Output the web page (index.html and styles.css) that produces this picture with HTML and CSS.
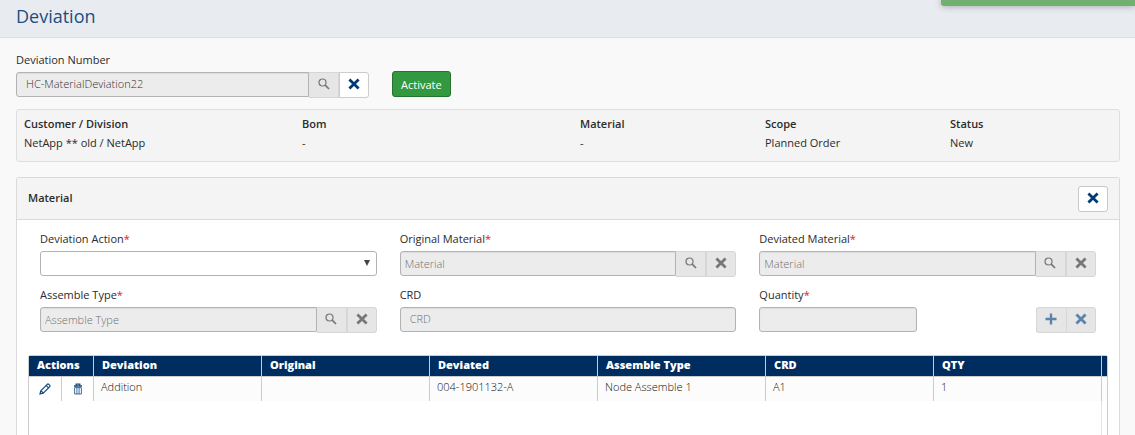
FILE: index.html
```
<!DOCTYPE html>
<html lang="en">
<head>
<meta charset="utf-8">
<title>Deviation</title>
<link rel="stylesheet" href="styles.css">
</head>
<body>
<svg class="defs" aria-hidden="true">
  <symbol id="search" viewBox="0 0 12 12"><circle cx="4.5" cy="4.5" r="3.5" fill="none" stroke="currentColor" stroke-width="1.2"/><path d="M7.2 7.2 L11 11" stroke="currentColor" stroke-width="1.7"/></symbol>
  <symbol id="cross" viewBox="0 0 12 12"><path d="M1.4 1.6 L10.6 10.4 M10.6 1.6 L1.4 10.4" stroke="currentColor" stroke-width="2.8"/></symbol>
  <symbol id="plus" viewBox="0 0 12 12"><path d="M6 0.5 V11.5 M0.5 6 H11.5" stroke="currentColor" stroke-width="2.4"/></symbol>
  <symbol id="pencil" viewBox="0 0 12 12"><path d="M1 11 L1.8 7.8 L8.2 1.4 Q9 0.6 9.8 1.4 L10.6 2.2 Q11.4 3 10.6 3.8 L4.2 10.2 Z M7.2 2.4 L9.6 4.8 M2 7.8 L4.2 10" fill="none" stroke="currentColor" stroke-width="1.2"/></symbol>
  <symbol id="trash" viewBox="0 0 12 12"><path d="M2 3 H10 M4.2 2.6 V1.2 H7.8 V2.6" fill="none" stroke="currentColor" stroke-width="1.3"/><path d="M2.6 4.6 H9.4 V11 H2.6 Z M4.9 4.6 V11 M7.1 4.6 V11" fill="none" stroke="currentColor" stroke-width="0.8"/></symbol>
</svg>
<div class="toast" role="status"></div>
<header class="page-header"><h1 class="page-title">Deviation</h1></header>
<main class="content">
  <section class="lookup">
    <div class="field lookup-field">
      <label for="number">Deviation Number</label>
      <div class="group">
        <input id="number" class="input indented" value="HC-MaterialDeviation22" disabled>
        <button class="addon" type="button" aria-label="Search deviation" disabled><svg class="icon"><use href="#search"/></svg></button>
        <button class="addon enabled" type="button" aria-label="Clear deviation"><svg class="icon"><use href="#cross"/></svg></button>
      </div>
    </div>
    <button class="activate" type="button">Activate</button>
  </section>

  <dl class="summary">
    <div><dt>Customer / Division</dt><dd>NetApp ** old / NetApp</dd></div>
    <div><dt>Bom</dt><dd>-</dd></div>
    <div><dt>Material</dt><dd>-</dd></div>
    <div><dt>Scope</dt><dd>Planned Order</dd></div>
    <div><dt>Status</dt><dd>New</dd></div>
  </dl>

  <section class="panel">
    <div class="panel-header">
      <h2 class="panel-title">Material</h2>
      <button class="close" type="button" aria-label="Close"><svg class="icon"><use href="#cross"/></svg></button>
    </div>
    <form class="form">
      <div class="field">
        <label for="action">Deviation Action<span class="req">*</span></label>
        <div class="select-wrap"><select id="action" class="input select"><option></option></select></div>
      </div>
      <div class="field">
        <label for="original">Original Material<span class="req">*</span></label>
        <div class="group">
          <input id="original" class="input" placeholder="Material" disabled>
          <button class="addon" type="button" aria-label="Search original material" disabled><svg class="icon"><use href="#search"/></svg></button>
          <button class="addon" type="button" aria-label="Clear original material" disabled><svg class="icon"><use href="#cross"/></svg></button>
        </div>
      </div>
      <div class="field">
        <label for="deviated">Deviated Material<span class="req">*</span></label>
        <div class="group">
          <input id="deviated" class="input" placeholder="Material" disabled>
          <button class="addon" type="button" aria-label="Search deviated material" disabled><svg class="icon"><use href="#search"/></svg></button>
          <button class="addon" type="button" aria-label="Clear deviated material" disabled><svg class="icon"><use href="#cross"/></svg></button>
        </div>
      </div>
      <div class="field">
        <label for="assemble">Assemble Type<span class="req">*</span></label>
        <div class="group">
          <input id="assemble" class="input" placeholder="Assemble Type" disabled>
          <button class="addon" type="button" aria-label="Search assemble type" disabled><svg class="icon"><use href="#search"/></svg></button>
          <button class="addon" type="button" aria-label="Clear assemble type" disabled><svg class="icon"><use href="#cross"/></svg></button>
        </div>
      </div>
      <div class="field">
        <label for="crd">CRD</label>
        <div class="group"><input id="crd" class="input indented rounded" placeholder="CRD" disabled></div>
      </div>
      <div class="field">
        <label for="quantity">Quantity<span class="req">*</span></label>
        <div class="group spread">
          <input id="quantity" class="input rounded short" disabled>
          <div class="group">
            <button class="addon blue first" type="button" aria-label="Add" disabled><svg class="icon"><use href="#plus"/></svg></button>
            <button class="addon blue" type="button" aria-label="Reset" disabled><svg class="icon"><use href="#cross"/></svg></button>
          </div>
        </div>
      </div>
    </form>
    <div class="grid">
      <table class="table">
        <colgroup><col class="col-edit"><col class="col-delete"><col><col><col><col><col><col><col class="col-scroll"></colgroup>
        <thead><tr><th colspan="2">Actions</th><th>Deviation</th><th>Original</th><th>Deviated</th><th>Assemble Type</th><th>CRD</th><th>QTY</th><th class="scroll"></th></tr></thead>
        <tbody><tr>
          <td class="act"><button class="row-action" type="button" aria-label="Edit"><svg class="icon"><use href="#pencil"/></svg></button></td>
          <td class="act"><button class="row-action" type="button" aria-label="Delete"><svg class="icon"><use href="#trash"/></svg></button></td>
          <td>Addition</td><td></td><td>004-1901132-A</td><td>Node Assemble 1</td><td>A1</td><td>1</td><td class="scroll"></td>
        </tr></tbody>
      </table>
      <div class="grid-rest"></div>
    </div>
  </section>
</main>
</body>
</html>
```
FILE: styles.css
```
* { box-sizing: border-box; }
body {
  margin: 0;
  height: 100vh;
  display: flex;
  flex-direction: column;
  overflow: hidden;
  background: #f9f9f9;
  color: #2b2b2b;
  font: 11px/15px "Open Sans", "Noto Sans", sans-serif;
}
button, input, select { font: inherit; margin: 0; }
.defs { display: none; }
.icon { display: block; width: 12px; height: 12px; }

.toast {
  position: fixed;
  top: 0;
  right: 0;
  width: 194px;
  height: 6px;
  background: #70b070;
  border-bottom-left-radius: 3px;
  box-shadow: 0 0 7px #999;
}
.page-header {
  padding: 4px 16px 9px;
  background: #e8ebf0;
  border-bottom: 1px solid #dcdee4;
}
.page-title {
  margin: 0;
  color: #1c4f80;
  font-size: 18px;
  font-weight: 400;
  line-height: 24px;
}
.content {
  flex: 1;
  display: flex;
  flex-direction: column;
  padding: 14px 15px 0 16px;
}

.lookup { display: flex; align-items: flex-end; gap: 23px; }
.lookup-field { width: 353px; }
.field { display: flex; flex-direction: column; gap: 5px; min-width: 0; }
.req { color: #e02020; }
.group { display: flex; align-items: flex-start; }
.spread { justify-content: space-between; }
.input {
  flex: 1;
  width: 100%;
  min-width: 0;
  height: 25px;
  padding: 0 4px 1px;
  border: 1px solid #b3b3b3;
  border-radius: 3px 0 0 3px;
  background: #ececec;
  color: #333;
  font-weight: 300;
  box-shadow: inset 0 1px 1px #ddd;
}
.input::placeholder { color: #707070; opacity: 1; }
.indented { padding: 0 9px 2px; }
.rounded { border-radius: 3px; }
.short { flex: none; width: 158px; }
.select-wrap { position: relative; display: flex; }
.select-wrap::after {
  content: "";
  position: absolute;
  top: 9px;
  right: 7px;
  border: 3px solid transparent;
  border-top: 6px solid #444;
  border-bottom: 0;
  pointer-events: none;
}
.select { appearance: none; border-radius: 3px; background: #fff; box-shadow: none; }

.addon {
  display: grid;
  place-items: center;
  width: 30px;
  height: 26px;
  padding: 0 0 3px;
  border: 1px solid #d6d6d6;
  border-left-width: 0;
  background: #e6e6e6;
  color: #777;
}
.addon:last-child { border-left-width: 1px; border-radius: 0 3px 3px 0; }
.addon.first { border-left-width: 1px; border-right-width: 0; border-radius: 3px 0 0 3px; }
.addon.blue { color: #5b83ab; }
.addon.enabled { background: #fff; border-color: #ccc; color: #003b76; }
.activate {
  height: 26px;
  margin-bottom: 1px;
  padding: 0 8px;
  border: 1px solid #26722e;
  border-radius: 3px;
  background: #339940;
  color: #fff;
}

.summary {
  display: grid;
  grid-template-columns: 278fr 278fr 185fr 185fr 169fr;
  margin: 11px 0 15px;
  padding: 6px 0 8px 7px;
  border: 1px solid #dfdfdf;
  border-radius: 3px;
  background: #f4f4f4;
}
.summary dt { font-weight: 600; margin-bottom: 4px; }
.summary dd { margin: 0 0 3px; }

.panel {
  flex: 1;
  display: flex;
  flex-direction: column;
  border: 1px solid #dadada;
  border-bottom: 0;
  border-radius: 3px 3px 0 0;
  background: #fff;
}
.panel-header {
  display: flex;
  align-items: center;
  justify-content: space-between;
  padding: 8px 11px 7px 11px;
  border-bottom: 1px solid #dadada;
  background: #f4f4f4;
}
.panel-title { margin: 0; padding-bottom: 3px; font-size: 11px; font-weight: 600; line-height: 15px; }
.close {
  display: grid;
  place-items: center;
  width: 30px;
  height: 26px;
  padding: 0 0 3px;
  border: 1px solid #c8c8c8;
  border-radius: 3px;
  background: #fff;
  color: #003b76;
}
.form {
  display: grid;
  grid-template-columns: repeat(3, 1fr);
  gap: 10px 23px;
  padding: 11px 23px 22px 23px;
}

.grid {
  flex: 1;
  display: flex;
  flex-direction: column;
  margin: 0 11px;
  border: 1px solid #ccc;
  border-bottom: 0;
  border-radius: 3px 3px 0 0;
}
.grid-rest { flex: 1; margin-right: 5px; border-right: 1px solid #e4e4e4; }
.table { width: 100%; table-layout: fixed; border-collapse: separate; border-spacing: 0; }
.col-edit { width: 33px; }
.col-delete { width: 32px; }
.col-scroll { width: 5px; }
.table th {
  height: 20px;
  padding: 0 8px 4px;
  border-right: 1px solid #ccc;
  background: #002d5f;
  color: #fff;
  font-weight: 800;
  text-align: left;
}
.table td {
  height: 25px;
  padding: 0 7px 6px;
  border-top: 1px solid #ccc;
  border-right: 1px solid #ccc;
  background: #fcfcfc;
  color: #111;
  font-weight: 300;
}
.table .act { padding: 0; background: #fff; }
.table .scroll { padding: 0; border-right: 0; }
.row-action {
  display: grid;
  place-items: center;
  width: 100%;
  height: 24px;
  padding: 0;
  border: 0;
  background: none;
  color: #164d82;
}
```
